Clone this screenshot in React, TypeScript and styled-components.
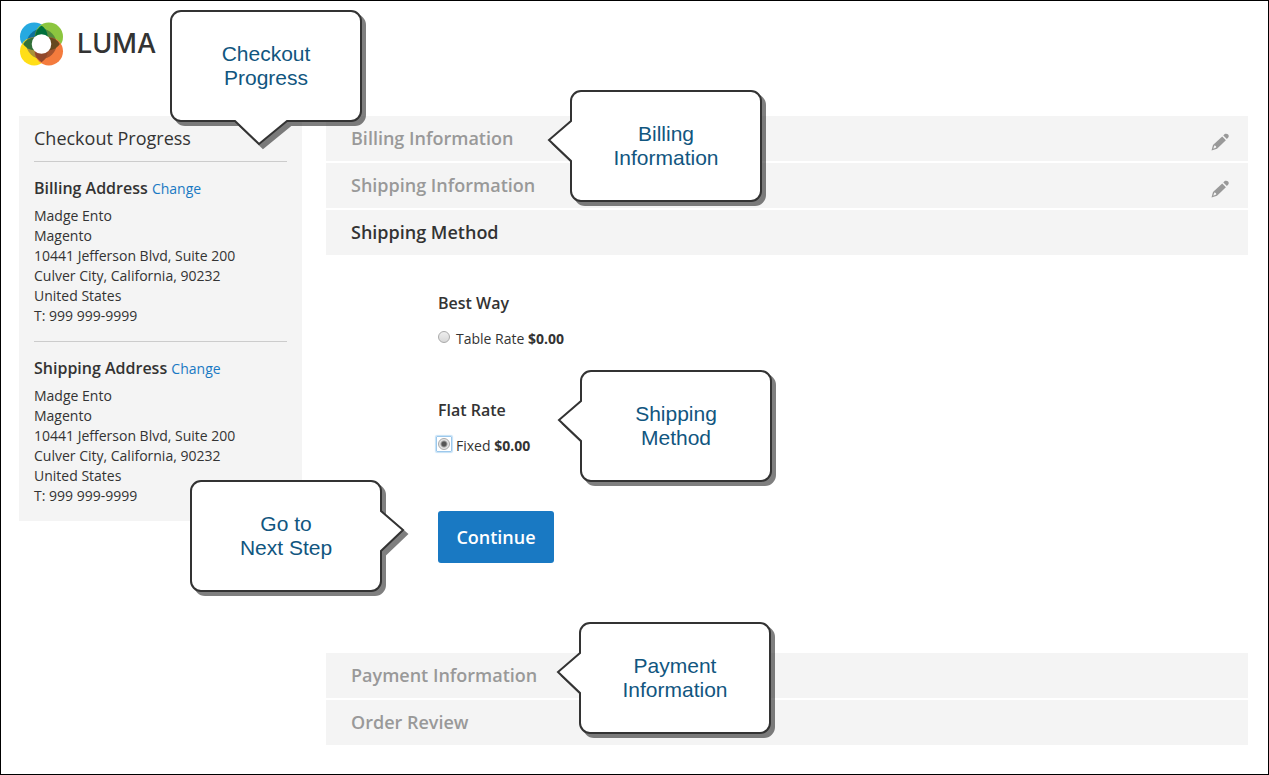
import React from "react";
import styled, { createGlobalStyle, css } from "styled-components";

const GlobalStyle = createGlobalStyle`
  *, *::before, *::after { box-sizing: border-box; }
  body {
    margin: 0;
    background: #fff;
    color: #333;
    font-family: "Open Sans", "Liberation Sans", sans-serif;
    font-size: 14px;
    line-height: 20px;
  }
  h1, h2, h3, p { margin: 0; }
`;

const Page = styled.div`
  min-height: 100vh;
  padding: 0 20px 29px 18px;
  border: 1px solid #000;
`;

const Header = styled.header`
  position: relative;
  height: 115px;
  padding-top: 21px;
`;

const LogoLink = styled.a`
  display: inline-flex;
  align-items: center;
  gap: 13px;
  color: #333;
  text-decoration: none;
`;

const Wordmark = styled.span`
  font-family: Inter, sans-serif;
  font-size: 27px;
  font-weight: 500;
  line-height: 44px;
`;

const Columns = styled.div`
  display: flex;
  align-items: flex-start;
  gap: 24px;
`;

const Sidebar = styled.aside`
  flex: 0 0 283px;
  padding: 7px 15px 15px;
  background: #f4f4f4;
`;

const SidebarTitle = styled.h2`
  padding-bottom: 8px;
  font-size: 18px;
  font-weight: 400;
  line-height: 30px;
`;

const AddressBlock = styled.section`
  padding: 16px 0 15px;
  border-top: 1px solid #ccc;
  &:last-child { padding-bottom: 0; }
`;

const AddressTitle = styled.h3`
  margin-bottom: 7px;
  font-size: 16px;
  font-weight: 600;
  line-height: 20px;
`;

const ChangeLink = styled.a`
  color: #1979c3;
  font-size: 14px;
  font-weight: 400;
  text-decoration: none;
`;

const Address = styled.address`
  font-style: normal;
`;

const Main = styled.main`
  flex: 1;
  min-width: 0;
`;

const StepList = styled.div`
  display: flex;
  flex-direction: column;
  gap: 2px;
`;

const StepBar = styled.div`
  position: relative;
  display: flex;
  align-items: center;
  justify-content: space-between;
  height: 45px;
  padding: 0 19px 2px 25px;
  background: #f4f4f4;
`;

const StepTitle = styled.h2<{ $active?: boolean }>`
  color: ${(p) => (p.$active ? "#333" : "#999")};
  font-size: 18px;
  font-weight: 600;
  line-height: 24px;
`;

const EditButton = styled.button`
  display: flex;
  margin-top: 8px;
  padding: 0;
  border: 0;
  background: none;
  color: #999;
  cursor: pointer;
`;

const MethodForm = styled.form`
  padding: 36px 0 90px 112px;
`;

const Method = styled.fieldset`
  position: relative;
  min-width: 0;
  margin: 0 0 48px;
  padding: 0;
  border: 0;
  &:last-of-type { margin-bottom: 54px; }
`;

const MethodName = styled.legend`
  padding: 0;
  margin-bottom: 13px;
  font-size: 16px;
  line-height: 24px;
  font-weight: 600;
`;

const Option = styled.label`
  display: flex;
  align-items: center;
  gap: 6px;
  height: 22px;
`;

const Radio = styled.input<{ $focused?: boolean }>`
  appearance: none;
  flex: none;
  width: 12px;
  height: 12px;
  margin: 0 0 4px;
  border: 1px solid #aaa;
  border-radius: 50%;
  background: linear-gradient(#eee, #d8d8d8);
  &:checked {
    background: radial-gradient(circle, #555 0 2px, #e4e4e4 4px);
  }
  ${(p) =>
    p.$focused &&
    css`
      position: relative;
      outline: none;
      &::after {
        content: "";
        position: absolute;
        inset: -3px;
        border: 1px solid #9cc8ec;
        border-radius: 1px;
        box-shadow: 0 0 1px 1px #c5e1f6;
      }
    `}
`;

const OptionText = styled.span`
  strong { font-weight: 700; }
`;

const Actions = styled.div`
  position: relative;
`;

const ContinueButton = styled.button`
  width: 116px;
  height: 52px;
  padding: 0;
  border: 0;
  border-radius: 3px;
  background: #1979c3;
  color: #fff;
  font: 600 18px/24px "Open Sans", sans-serif;
  cursor: pointer;
`;

/* Explanatory speech bubbles, floating over the part that they describe */
const Bubble = styled.aside<{ $x: number; $y: number }>`
  position: absolute;
  z-index: 2;
  left: ${(p) => p.$x}px;
  top: ${(p) => p.$y}px;
  display: flex;
  align-items: center;
  justify-content: center;
  width: 192px;
  height: 112px;
`;

const BubbleShape = styled.svg`
  position: absolute;
  inset: 0;
  overflow: visible;
  filter: drop-shadow(4px 4px 0 rgba(0, 0, 0, 0.5));
`;

const BubbleText = styled.p`
  position: relative;
  color: #11567f;
  font-family: "Liberation Sans", Arial, sans-serif;
  font-size: 21px;
  font-weight: 400;
  line-height: 24px;
  text-align: center;
`;

type Side = "left" | "right" | "bottom";

const bubblePaths: Record<Side, string> = {
  left: "M11 1H181A10 10 0 0 1 191 11V101A10 10 0 0 1 181 111H11A10 10 0 0 1 1 101V71L-21 50L1 31V11A10 10 0 0 1 11 1Z",
  right:
    "M11 1H181A10 10 0 0 1 191 11V31L213 50L191 71V101A10 10 0 0 1 181 111H11A10 10 0 0 1 1 101V11A10 10 0 0 1 11 1Z",
  bottom:
    "M11 1H181A10 10 0 0 1 191 11V101A10 10 0 0 1 181 111H117L89 134L65 111H11A10 10 0 0 1 1 101V11A10 10 0 0 1 11 1Z",
};

function Callout({ side, x, y, lines }: { side: Side; x: number; y: number; lines: [string, string] }) {
  return (
    <Bubble $x={x} $y={y}>
      <BubbleShape width="192" height="112" aria-hidden="true">
        <path d={bubblePaths[side]} fill="#fff" stroke="#333" strokeWidth="2" />
      </BubbleShape>
      <BubbleText>
        {lines[0]}
        <br />
        {lines[1]}
      </BubbleText>
    </Bubble>
  );
}

const petals = [
  { id: "blue", cx: 15, cy: 15, outer: "#26a9e0", inner: "#0f719b" },
  { id: "green", cx: 30, cy: 15, outer: "#8cc63f", inner: "#548b3b" },
  { id: "yellow", cx: 15, cy: 30, outer: "#ffde17", inner: "#aa9238" },
  { id: "orange", cx: 30, cy: 30, outer: "#f47b3d", inner: "#a5522d" },
];

const overlaps = [
  { angle: 0, fill: "#00703c" },
  { angle: 90, fill: "#66491f" },
  { angle: 180, fill: "#91482b" },
  { angle: 270, fill: "#327039" },
];

function LogoMark() {
  return (
    <svg width="45" height="44" viewBox="0 0 45 45" aria-hidden="true">
      {petals.map((p) => (
        <React.Fragment key={p.id}>
          <clipPath id={p.id}>
            <circle cx={p.cx} cy={p.cy} r="14.5" />
          </clipPath>
          <circle cx={p.cx} cy={p.cy} r="14.5" fill={p.outer} />
        </React.Fragment>
      ))}
      {petals.map((p) => (
        <g key={p.id} clipPath={`url(#${p.id})`}>
          <circle cx="22.5" cy="22.5" r="15.3" fill={p.inner} />
        </g>
      ))}
      {overlaps.map((o) => (
        <path
          key={o.angle}
          d="M22.5 3.8C26 6 28.5 9.500 28.800 15H16.200C16.500 9.500 19 6 22.5 3.8Z"
          fill={o.fill}
          transform={`rotate(${o.angle} 22.5 22.5)`}
        />
      ))}
      <circle cx="22.5" cy="22.5" r="10" fill="#fff" />
    </svg>
  );
}

function Pencil() {
  return (
    <svg width="18" height="18" viewBox="0 0 18 18" aria-hidden="true">
      <path d="M.5 17.5L2 12L11.2 3.400L14.900 7.200L6 15.800Z" fill="currentColor" />
      <path d="M12.300 2.400L13.700 1.100C14.900 .2 16.300 .7 17.100 1.600C17.900 2.500 18 3.700 17.200 4.600L15.900 6Z" fill="currentColor" />
      <path d="M2.300 15.800L3.300 12.600C4.600 12.500 5.300 13.300 5.200 14.400Z" fill="#f4f4f4" />
    </svg>
  );
}

function Recipient({ title }: { title: string }) {
  return (
    <AddressBlock>
      <AddressTitle>
        {title} <ChangeLink href="#">Change</ChangeLink>
      </AddressTitle>
      <Address>
        Madge Ento
        <br />
        Magento
        <br />
        10441 Jefferson Blvd, Suite 200
        <br />
        Culver City, California, 90232
        <br />
        United States
        <br />
        T: 999 999-9999
      </Address>
    </AddressBlock>
  );
}

export default function App() {
  return (
    <>
      <GlobalStyle />
      <Page>
        <Header>
          <LogoLink href="#">
            <LogoMark />
            <Wordmark>LUMA</Wordmark>
          </LogoLink>
          <Callout side="bottom" x={151} y={9} lines={["Checkout", "Progress"]} />
        </Header>
        <Columns>
          <Sidebar>
            <SidebarTitle>Checkout Progress</SidebarTitle>
            <Recipient title="Billing Address" />
            <Recipient title="Shipping Address" />
          </Sidebar>
          <Main>
            <StepList>
              <StepBar>
                <StepTitle>Billing Information</StepTitle>
                <EditButton type="button" aria-label="Edit billing information">
                  <Pencil />
                </EditButton>
                <Callout side="left" x={244} y={-26} lines={["Billing", "Information"]} />
              </StepBar>
              <StepBar>
                <StepTitle>Shipping Information</StepTitle>
                <EditButton type="button" aria-label="Edit shipping information">
                  <Pencil />
                </EditButton>
              </StepBar>
              <StepBar>
                <StepTitle $active>Shipping Method</StepTitle>
              </StepBar>
            </StepList>
            <MethodForm onSubmit={(e) => e.preventDefault()}>
              <Method>
                <MethodName>Best Way</MethodName>
                <Option>
                  <Radio type="radio" name="method" value="table" />
                  <OptionText>
                    Table Rate <strong>$0.00</strong>
                  </OptionText>
                </Option>
              </Method>
              <Method>
                <MethodName>Flat Rate</MethodName>
                <Option>
                  <Radio type="radio" name="method" value="fixed" defaultChecked $focused />
                  <OptionText>
                    Fixed <strong>$0.00</strong>
                  </OptionText>
                </Option>
                <Callout side="left" x={142} y={-65} lines={["Shipping", "Method"]} />
              </Method>
              <Actions>
                <ContinueButton type="submit">Continue</ContinueButton>
                <Callout side="right" x={-248} y={-31} lines={["Go to", "Next Step"]} />
              </Actions>
            </MethodForm>
            <StepList>
              <StepBar>
                <StepTitle>Payment Information</StepTitle>
                <Callout side="left" x={253} y={-31} lines={["Payment", "Information"]} />
              </StepBar>
              <StepBar>
                <StepTitle>Order Review</StepTitle>
              </StepBar>
            </StepList>
          </Main>
        </Columns>
      </Page>
    </>
  );
}
